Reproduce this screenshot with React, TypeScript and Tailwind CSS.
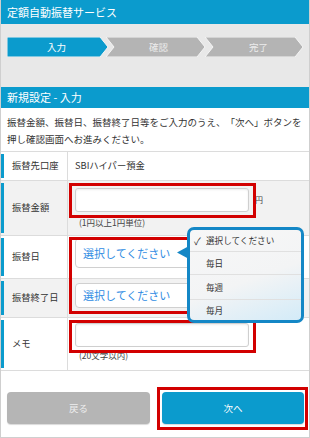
import React from "react";

const rows = [
  { label: "振替先口座", h: "h-[29px]", bg: "bg-white" },
  { label: "振替金額", h: "h-[55px]", bg: "bg-[#f2f2f2]" },
  { label: "振替日", h: "h-[43px]", bg: "bg-white" },
  { label: "振替終了日", h: "h-[39px]", bg: "bg-[#f2f2f2]" },
  { label: "メモ", h: "h-[53px]", bg: "bg-white" },
];

function StepBar() {
  return (
    <div className="relative h-[20px] w-[297px]">
      <svg className="absolute inset-0" width="297" height="20" viewBox="0 0 297 20">
        <polygon points="0,0 93,0 101,10 93,20 0,20" fill="#0b9bcd" stroke="#f4f4f4" strokeWidth="1" />
        <polygon points="99,0 190,0 198,10 190,20 99,20 107,10" fill="#b4b4b4" stroke="#f4f4f4" strokeWidth="1" />
        <polygon points="198,0 288,0 296,10 288,20 198,20 206,10" fill="#b4b4b4" stroke="#f4f4f4" strokeWidth="1" />
      </svg>
      <div className="relative flex h-full text-[9.5px] leading-[20px]">
        <span className="w-[99px] text-center text-white">入力</span>
        <span className="w-[101px] pl-[4px] text-center text-[#ececec]">確認</span>
        <span className="w-[97px] pl-[6px] text-center text-[#ececec]">完了</span>
      </div>
    </div>
  );
}

function Row({ index, children }: { index: number; children?: React.ReactNode }) {
  const row = rows[index];
  return (
    <div className={`flex border-b border-[#dcdcdc] ${row.h} ${row.bg}`}>
      <div className="flex w-[67px] shrink-0 items-center border-r border-[#dcdcdc]">
        <div className="my-[2px] w-[3px] self-stretch bg-[#0b9bcd]" />
        <span className="pl-[8px] text-[9.3px] text-[#333]">{row.label}</span>
      </div>
      <div className="flex-1 pl-[7px]">{children}</div>
    </div>
  );
}

function TextBox({ h }: { h: string }) {
  return (
    <div
      className={`${h} w-[174px] rounded-[3px] border border-[#cfcfcf] bg-white shadow-[inset_0_1px_2px_rgba(0,0,0,0.08)]`}
    />
  );
}

function SelectBox({ h, mt }: { h: string; mt: string }) {
  return (
    <div
      className={`${h} ${mt} flex w-[174px] items-center rounded-[4px] border border-[#d0d0d0] bg-white pl-[7px] text-[11px] text-[#2f8ce3]`}
    >
      選択してください
    </div>
  );
}

function DropMenu() {
  const items = [
    { text: "毎日", h: "h-[23px]" },
    { text: "毎週", h: "h-[25px]" },
    { text: "毎月", h: "flex-1" },
  ];
  return (
    <>
      <svg className="absolute left-[176px] top-[246px]" width="12" height="13" viewBox="0 0 12 13">
        <polygon points="0,6.5 12,0 12,13" fill="#1487c6" />
      </svg>
      <div className="absolute left-[186px] top-[227px] flex h-[96px] w-[117px] flex-col overflow-hidden rounded-[7px] border-[3px] border-[#1487c6] bg-[linear-gradient(160deg,#f7f7f7_0%,#f3f4f5_55%,#d3ebf8_100%)] text-[8.6px] text-[#333]">
        <div className="flex h-[22px] items-center border-b border-[#e0e0e0] pl-[4px]">
          <span className="w-[12px] text-[10px]">✓</span>
          <span>選択してください</span>
        </div>
        {items.map((item) => (
          <div
            key={item.text}
            className={`flex ${item.h} items-center border-b border-[#e0e0e0] pl-[16px] last:border-b-0`}
          >
            {item.text}
          </div>
        ))}
      </div>
    </>
  );
}

export default function App() {
  return (
    <div className="relative h-[438px] w-[310px] overflow-hidden border-x border-b border-[#cfcfcf] bg-white font-['Noto_Sans_CJK_JP',sans-serif] [text-spacing-trim:space-all]">
      <div className="h-[24px] bg-[#0b9bcd] pl-[6px] text-[11px] leading-[24px] text-white">
        定額自動振替サービス
      </div>
      <div className="h-[63px] bg-[#e8e8e8] pl-[6px] pt-[13px]">
        <StepBar />
      </div>
      <div className="h-[21px] bg-[#0b9bcd] pl-[6px] text-[11px] leading-[21px] text-white">
        新規設定 - 入力
      </div>
      <div className="h-[44px] border-b border-[#dcdcdc] pl-[6px] pt-[6px] text-[9.5px] leading-[17px] text-[#333]">
        振替金額、振替日、振替終了日等をご入力のうえ、「次へ」ボタンを
        <br />
        押し確認画面へお進みください。
      </div>

      <Row index={0}>
        <div className="flex h-full items-center text-[9.3px] text-[#333]">SBIハイパー預金</div>
      </Row>
      <Row index={1}>
        <div className="flex items-start pt-[7px]">
          <TextBox h="h-[24px]" />
          <span className="ml-[6px] mt-[6px] text-[8px] text-[#444]">円</span>
        </div>
        <div className="mt-[4px] pl-[4px] text-[8.5px] leading-[12px] text-[#444]">(1円以上1円単位)</div>
      </Row>
      <Row index={2}>
        <SelectBox h="h-[30px]" mt="mt-[2px]" />
      </Row>
      <Row index={3}>
        <SelectBox h="h-[25px]" mt="mt-[4px]" />
      </Row>
      <Row index={4}>
        <div className="pt-[5px]">
          <TextBox h="h-[24px]" />
        </div>
        <div className="mt-[2px] pl-[4px] text-[8.5px] leading-[12px] text-[#444]">(20文字以内)</div>
      </Row>

      <div className="flex gap-[12px] pl-[6px] pt-[21px]">
        <button className="h-[32px] w-[143px] rounded-[4px] bg-[#b5b5b5] text-[9.5px] text-[#eeeeee] shadow-[0_1px_1px_rgba(0,0,0,0.15)]">
          戻る
        </button>
        <button className="h-[32px] w-[142px] rounded-[4px] bg-[#0b9bcd] text-[9.5px] text-white shadow-[0_1px_1px_rgba(0,0,0,0.15)]">
          次へ
        </button>
      </div>

      <div className="absolute left-[68px] top-[183px] h-[35px] w-[187px] border-[3px] border-[#d20000]" />
      <div className="absolute left-[68px] top-[237px] h-[77px] w-[187px] border-[3px] border-[#d20000]" />
      <div className="absolute left-[68px] top-[320px] h-[33px] w-[187px] border-[3px] border-[#d20000]" />
      <div className="absolute left-[156px] top-[387px] h-[43px] w-[151px] border-[3px] border-[#d20000]" />

      <DropMenu />
    </div>
  );
}
